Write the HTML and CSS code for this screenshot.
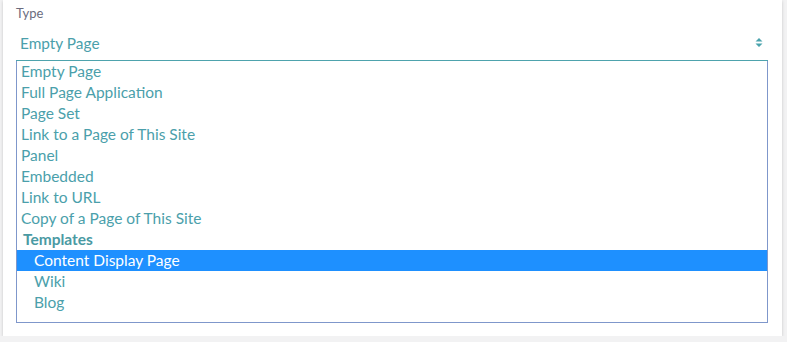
FILE: index.html
```html
<!DOCTYPE html>
<html>
<head>
<meta charset="utf-8">
<link rel="stylesheet" href="styles.css">
</head>
<body>
<div class="card">
  <div class="label">Type</div>
  <div class="select">
    <span class="value">Empty Page</span>
    <svg class="arrows" width="8" height="10" viewBox="0 0 8 10"><path d="M4 0 L7.5 3.5 H0.5 Z M0.5 5.5 H7.5 L4 9 Z" fill="#4ba3ad"/></svg>
  </div>
  <div class="list">
    <div class="opt">Empty Page</div>
    <div class="opt">Full Page Application</div>
    <div class="opt">Page Set</div>
    <div class="opt">Link to a Page of This Site</div>
    <div class="opt">Panel</div>
    <div class="opt">Embedded</div>
    <div class="opt">Link to URL</div>
    <div class="opt">Copy of a Page of This Site</div>
    <div class="group">Templates</div>
    <div class="opt sub selected">Content Display Page</div>
    <div class="opt sub">Wiki</div>
    <div class="opt sub">Blog</div>
  </div>
</div>
</body>
</html>
```
FILE: styles.css
```css
html, body {
  margin: 0;
  padding: 0;
  background: #f2f2f3;
  font-family: Lato, "Open Sans", sans-serif;
}
.card {
  margin: 0 5px 0 3px;
  height: 336px;
  box-sizing: border-box;
  background: #fff;
  box-shadow: 0 1px 3px rgba(0,0,0,0.18);
  padding: 4px 14px 0 13px;
}
.label {
  font-size: 13px;
  line-height: 18px;
  color: #6b6c7e;
}
.select {
  height: 39px;
  display: flex;
  align-items: center;
  justify-content: space-between;
  padding: 3px 5px 0 4px;
  box-sizing: border-box;
  border-bottom: 1px solid #4ea3ad;
}
.value {
  font-size: 15.4px;
  color: #4b9fab;
}
.arrows {
  display: block;
}
.list {
  border: 1px solid #7f97cb;
  border-top: none;
  padding-bottom: 9px;
}
.opt, .group {
  height: 21px;
  line-height: 21px;
  font-size: 15.5px;
  color: #4b9fab;
  padding-left: 4px;
  white-space: nowrap;
}
.group {
  font-weight: bold;
  padding-left: 6px;
  color: #4a9aa3;
}
.sub {
  padding-left: 17px;
}
.selected {
  background: #1e90ff;
  color: #fff;
}
```
